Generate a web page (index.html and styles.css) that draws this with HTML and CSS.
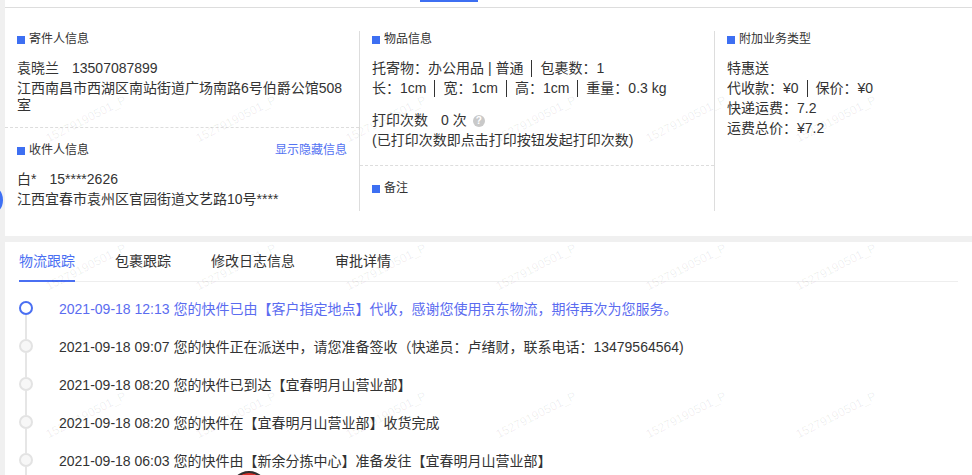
FILE: index.html
```html
<!DOCTYPE html>
<html lang="zh-CN">
<head>
    <meta charset="UTF-8">
    <meta name="viewport" content="width=device-width, initial-scale=1.0">
    <title>运单详情</title>
    <link rel="stylesheet" href="styles.css">
</head>
<body>
    <div class="page">
        <div class="topbar"><span class="topbar-active"></span></div>

        <section class="card info-card">
            <div class="info-cols">
                <div class="info-col">
                    <div class="info-block sender">
                        <h3 class="block-title">寄件人信息</h3>
                        <p>袁晓兰<span class="phone">13507087899</span></p>
                        <p>江西南昌市西湖区南站街道广场南路6号伯爵公馆508室</p>
                    </div>
                    <div class="info-block">
                        <div class="block-head">
                            <h3 class="block-title">收件人信息</h3>
                            <a class="link">显示隐藏信息</a>
                        </div>
                        <p>白*<span class="phone">15****2626</span></p>
                        <p>江西宜春市袁州区官园街道文艺路10号****</p>
                    </div>
                </div>

                <div class="info-col">
                    <div class="info-block goods">
                        <h3 class="block-title">物品信息</h3>
                        <p>托寄物：办公用品 | 普通<span class="sep"></span>包裹数：1</p>
                        <p>长：1cm<span class="sep"></span>宽：1cm<span class="sep"></span>高：1cm<span class="sep"></span>重量：0.3 kg</p>
                        <p class="print">打印次数<span class="count">0 次</span><span class="help">?</span></p>
                        <p>(已打印次数即点击打印按钮发起打印次数)</p>
                    </div>
                    <div class="info-block">
                        <h3 class="block-title">备注</h3>
                    </div>
                </div>

                <div class="info-col">
                    <div class="info-block">
                        <h3 class="block-title">附加业务类型</h3>
                        <p>特惠送</p>
                        <p>代收款：¥0<span class="sep"></span>保价：¥0</p>
                        <p>快递运费：7.2</p>
                        <p>运费总价：¥7.2</p>
                    </div>
                </div>
            </div>
        </section>

        <section class="card track-card">
            <div class="tabs">
                <span class="tab active">物流跟踪</span>
                <span class="tab">包裹跟踪</span>
                <span class="tab">修改日志信息</span>
                <span class="tab">审批详情</span>
            </div>
            <ul class="timeline">
                <li class="current"><span class="dot"></span>2021-09-18 12:13 您的快件已由【客户指定地点】代收，感谢您使用京东物流，期待再次为您服务。</li>
                <li><span class="dot"></span>2021-09-18 09:07 您的快件正在派送中，请您准备签收（快递员：卢绪财，联系电话：13479564564)</li>
                <li><span class="dot"></span>2021-09-18 08:20 您的快件已到达【宜春明月山营业部】</li>
                <li><span class="dot"></span>2021-09-18 08:20 您的快件在【宜春明月山营业部】收货完成</li>
                <li><span class="dot"></span>2021-09-18 06:03 您的快件由【新余分拣中心】准备发往【宜春明月山营业部】</li>
            </ul>
        </section>

        <div class="watermark">
            <span>15279190501_P</span><span>15279190501_P</span><span>15279190501_P</span><span>15279190501_P</span><span>15279190501_P</span><span>15279190501_P</span>
            <span>15279190501_P</span><span>15279190501_P</span><span>15279190501_P</span><span>15279190501_P</span><span>15279190501_P</span><span>15279190501_P</span>
            <span>15279190501_P</span><span>15279190501_P</span><span>15279190501_P</span><span>15279190501_P</span><span>15279190501_P</span><span>15279190501_P</span>
        </div>
    </div>

    <div class="side-tab"></div>
    <div class="float-btn"></div>
</body>
</html>
```

FILE: styles.css
```css
body {
    margin: 0;
    background-color: #f0f0f0;
    color: #333;
    font-family: "Liberation Sans", "Noto Sans CJK SC", sans-serif;
    font-size: 14px;
    height: 100vh;
    overflow: hidden;
}

.page {
    margin-left: 5px;
    position: relative;
}

.topbar {
    height: 7px;
    background-color: #fff;
    border-bottom: 1px solid #ddd;
}

.topbar-active {
    display: block;
    width: 58px;
    height: 2px;
    margin-left: 415px;
    background-color: #3d6ff2;
}

.card {
    background-color: #fff;
}

.info-card {
    padding: 23px 0 25px;
    margin-bottom: 6px;
    overflow: hidden;
}

.info-cols {
    display: grid;
    grid-template-columns: 354px 355px 355px;
    height: 180px;
}

.info-col + .info-col {
    border-left: 1px solid #ddd;
}

.info-block {
    padding: 0 12px;
}

.info-block + .info-block {
    border-top: 1px dashed #ddd;
    padding-top: 14px;
}

.sender {
    padding-bottom: 10px;
}

.goods {
    padding-bottom: 13px;
}

.block-title {
    display: flex;
    align-items: center;
    margin: 0 0 12px;
    font-size: 12px;
    font-weight: normal;
    line-height: 17px;
}

.block-title::before {
    content: "";
    width: 8px;
    height: 8px;
    margin-right: 4px;
    background-color: #3d6ff2;
}

.block-head {
    display: flex;
    justify-content: space-between;
    align-items: center;
    margin-bottom: 12px;
}

.block-head .block-title {
    margin: 0;
}

.link {
    color: #5372f2;
    font-size: 12px;
    line-height: 17px;
    cursor: pointer;
}

.info-block p {
    margin: 0 0 3px;
    line-height: 17px;
}

.phone {
    margin-left: 13px;
}

.sep {
    display: inline-block;
    width: 0;
    height: 17px;
    border-left: 1px solid #333;
    margin: 0 8px;
    vertical-align: top;
}

.info-block .print {
    display: flex;
    align-items: center;
    margin-top: 15px;
}

.count {
    margin-left: 13px;
}

.help {
    width: 12px;
    height: 12px;
    margin-left: 6px;
    border-radius: 50%;
    background-color: #c9c9c9;
    color: #fff;
    font-size: 10px;
    font-weight: bold;
    line-height: 12px;
    text-align: center;
}

.track-card {
    padding: 0 14px;
    height: 240px;
}

.tabs {
    display: flex;
    border-bottom: 1px solid #eee;
}

.tab {
    margin-right: 40px;
    margin-bottom: -1px;
    line-height: 38px;
    border-bottom: 2px solid transparent;
    cursor: pointer;
}

.tab.active {
    color: #4a6ff2;
    border-bottom-color: #4a6ff2;
}

.timeline {
    list-style: none;
    margin: 0;
    padding: 7px 0 0;
}

.timeline li {
    position: relative;
    display: flex;
    align-items: center;
    height: 38px;
    white-space: nowrap;
}

.timeline li::before {
    content: "";
    position: absolute;
    left: 6px;
    top: 26px;
    width: 2px;
    height: 24px;
    background-color: #e6e6e6;
}

.dot {
    width: 14px;
    height: 14px;
    margin-right: 26px;
    border: 2px solid #e3e3e3;
    border-radius: 50%;
    background-color: #f7f7f7;
    box-sizing: border-box;
    flex-shrink: 0;
}

.timeline .current {
    color: #5b6cf0;
}

.current .dot {
    border-color: #4a6ff2;
    background-color: #fff;
}

.watermark {
    position: absolute;
    top: 0;
    left: 0;
    width: 920px;
    height: 475px;
    padding: 45px 0 0 6px;
    box-sizing: border-box;
    display: grid;
    grid-template-columns: repeat(6, 150px);
    grid-auto-rows: 148px;
    pointer-events: none;
    overflow: hidden;
}

.watermark span {
    justify-self: center;
    align-self: center;
    color: rgba(0, 0, 0, 0.07);
    font-size: 12px;
    white-space: nowrap;
    transform: rotate(-27deg);
}

.side-tab {
    position: fixed;
    left: -23px;
    top: 185px;
    width: 26px;
    height: 30px;
    border-radius: 50%;
    background-color: #3e70f4;
}

.float-btn {
    position: fixed;
    left: 230px;
    top: 471px;
    width: 38px;
    height: 38px;
    border-radius: 50%;
    border: 2px solid #2e2e2e;
    background-color: #2e2e2e;
    box-shadow: inset 0 0 0 2px #d9302a;
    box-sizing: border-box;
}
```
